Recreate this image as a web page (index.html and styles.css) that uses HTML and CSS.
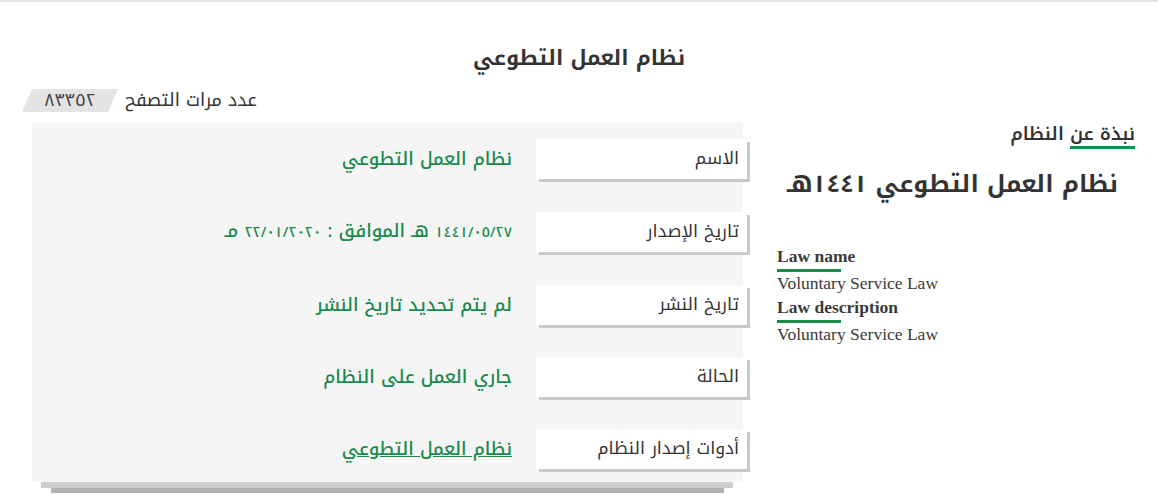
FILE: index.html
```html
<!DOCTYPE html>
<html lang="ar" dir="rtl">
<head>
<meta charset="utf-8">
<title>نظام العمل التطوعي</title>
<link rel="stylesheet" href="styles.css">
</head>
<body>
<div class="topline"></div>
<h1 class="page-title">نظام العمل التطوعي</h1>
<div class="layout">
  <aside class="sidebar">
    <div class="about"><span class="about-text">نبذة عن النظام</span></div>
    <h2 class="law-heading">نظام العمل التطوعي <span class="num">١٤٤١</span>هـ</h2>
    <div class="law-en" dir="ltr">
      <div class="en-title">Law name</div>
      <div class="en-line"></div>
      <div class="en-text">Voluntary Service Law</div>
      <div class="en-title">Law description</div>
      <div class="en-line"></div>
      <div class="en-text">Voluntary Service Law</div>
    </div>
  </aside>
  <main class="main">
    <div class="views">
      <span class="views-label">عدد مرات التصفح</span>
      <span class="views-badge"><span class="num">٨٣٣٥٢</span></span>
    </div>
    <div class="panel">
      <div class="row">
        <div class="label">الاسم</div>
        <div class="value">نظام العمل التطوعي</div>
      </div>
      <div class="row">
        <div class="label">تاريخ الإصدار</div>
        <div class="value"><span class="num date">١٤٤١/٠٥/٢٧</span> هـ الموافق : <span class="num date">٢٢/٠١/٢٠٢٠</span> مـ</div>
      </div>
      <div class="row">
        <div class="label">تاريخ النشر</div>
        <div class="value">لم يتم تحديد تاريخ النشر</div>
      </div>
      <div class="row">
        <div class="label">الحالة</div>
        <div class="value">جاري العمل على النظام</div>
      </div>
      <div class="row">
        <div class="label">أدوات إصدار النظام</div>
        <div class="value"><a class="value-link" href="#">نظام العمل التطوعي</a></div>
      </div>
    </div>
    <div class="bar bar-1"></div>
    <div class="bar bar-2"></div>
  </main>
</div>
</body>
</html>
```
FILE: styles.css
```css
* { box-sizing: border-box; }
html, body { margin: 0; padding: 0; background: #fff; }
body {
  direction: rtl;
  font-family: "Noto Kufi Arabic", "Noto Sans Arabic", "DejaVu Sans", sans-serif;
  color: #333;
  width: 1158px;
  height: 495px;
  overflow: hidden;
}
.topline { height: 2px; background: #e2e2e2; }
.page-title {
  margin: 43px 0 0;
  height: 26px;
  line-height: 26px;
  text-align: center;
  font-size: 21px;
  font-weight: 700;
  color: #333;
}
.layout {
  display: flex;
  flex-direction: row;
  align-items: flex-start;
  padding: 0 23px 0 20px;
  gap: 26px;
  margin-top: 18px;
}
.sidebar { width: 358px; flex: none; padding-top: 30px; }
.main { width: 731px; flex: none; }

.num { font-size: 0.85em; letter-spacing: -1.5px; }
.num.date { font-size: 0.8em; letter-spacing: -2px; }

.about { text-align: right; }
.about-text {
  display: inline-block;
  position: relative;
  font-size: 18px;
  font-weight: 600;
  line-height: 24px;
  padding-bottom: 3px;
}
.about-text::after {
  content: "";
  position: absolute;
  right: 0;
  bottom: 0;
  width: 65px;
  height: 3px;
  background: #178a4c;
}
.law-heading {
  margin: 16px 17px 0 0;
  font-size: 24px;
  font-weight: 700;
  line-height: 36px;
  text-align: right;
  color: #333;
}
.law-heading .num { letter-spacing: -0.5px; font-size: 1em; }
.law-en {
  margin-top: 44px;
  font-family: "Liberation Serif", "Times New Roman", serif;
  font-size: 17.5px;
  color: #3a3a3a;
  text-align: left;
}
.en-title { font-weight: 700; line-height: 20px; }
.en-line { width: 64px; height: 3px; background: #178a4c; margin-top: 3px; }
.en-text { line-height: 22px; margin-bottom: 3px; }

.views {
  display: flex;
  align-items: center;
  justify-content: flex-end;
  gap: 7px;
  height: 23px;
  padding-left: 2px;
}
.views-label { font-size: 18px; line-height: 23px; color: #333; }
.views-badge {
  width: 96px;
  height: 23px;
  line-height: 23px;
  text-align: center;
  background: #e4e4e4;
  font-size: 18px;
  color: #444;
  clip-path: polygon(10px 0, 100% 0, calc(100% - 10px) 100%, 0 100%);
}
.views-badge .num { letter-spacing: 0.5px; font-size: 1em; }
.panel {
  margin: 11px 8px 0 12px;
  background: #f5f5f5;
  padding: 16px 0 13px;
  display: flex;
  flex-direction: column;
  gap: 32px;
}
.row {
  display: flex;
  align-items: center;
  gap: 24px;
  margin-right: -4px;
}
.label {
  width: 211px;
  height: 40px;
  line-height: 40px;
  background: #fff;
  box-shadow: 3px 3px 0 #c9c9c9;
  padding-right: 8px;
  font-size: 17.5px;
  color: #333;
  flex: none;
}
.value {
  font-size: 18px;
  line-height: 40px;
  color: #178a4c;
  font-weight: 500;
}
.value-link { color: #178a4c; text-decoration: underline; }
.bar { height: 6px; }
.bar-1 { background: #cdcdcd; margin: 0 18px 0 21px; }
.bar-2 { background: #b2b2b2; height: 5px; margin: 0 27px 0 31px; }
```
